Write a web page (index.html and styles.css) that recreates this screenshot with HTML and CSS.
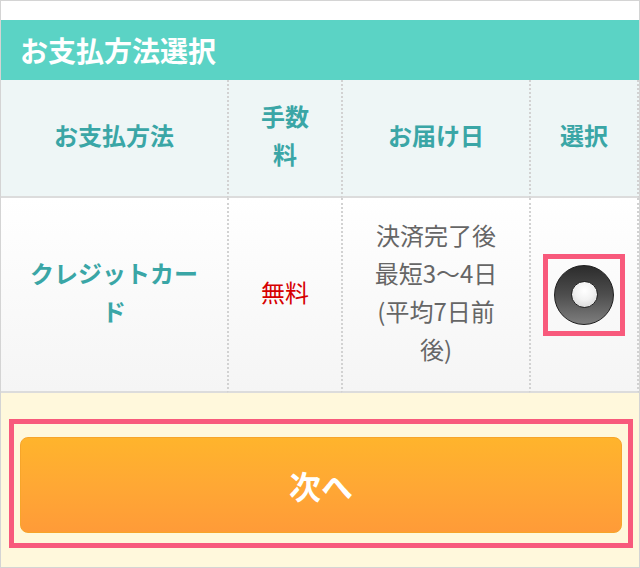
FILE: index.html
```html
<!DOCTYPE html>
<html lang="ja">
<head>
    <meta charset="UTF-8">
    <meta name="viewport" content="width=device-width, initial-scale=1.0">
    <title>お支払方法選択</title>
    <link rel="stylesheet" href="styles.css">
</head>
<body>
    <div class="page">
        <div class="section-title">
            <h2>お支払方法選択</h2>
        </div>

        <table class="pay-table">
            <colgroup>
                <col class="col-method">
                <col class="col-fee">
                <col class="col-date">
                <col class="col-select">
            </colgroup>
            <thead>
                <tr>
                    <th>お支払方法</th>
                    <th>手数料</th>
                    <th>お届け日</th>
                    <th>選択</th>
                </tr>
            </thead>
            <tbody>
                <tr>
                    <td class="method">クレジットカード</td>
                    <td class="fee">無料</td>
                    <td class="date">決済完了後最短3〜4日(平均7日前後)</td>
                    <td class="select">
                        <label class="radio-mark">
                            <input type="radio" name="payment" value="credit" checked>
                            <span class="radio"></span>
                        </label>
                    </td>
                </tr>
            </tbody>
        </table>

        <div class="next-area">
            <div class="next-mark">
                <button class="next-btn" type="button">次へ</button>
            </div>
        </div>
    </div>
</body>
</html>
```

FILE: styles.css
```css
* {
    margin: 0;
    padding: 0;
    box-sizing: border-box;
}

body {
    font-family: "Noto Sans CJK JP", "Noto Sans", sans-serif;
    background: white;
}

.page {
    width: 640px;
    height: 568px;
    border: 1px solid #d4d4d4;
    padding-top: 19px;
    background: white;
    overflow: hidden;
}

.section-title {
    background: #5bd3c5;
    height: 60px;
    padding-left: 19px;
    display: flex;
    align-items: center;
}

.section-title h2 {
    color: white;
    font-size: 28px;
    font-weight: 700;
    line-height: 1;
}

.pay-table {
    width: 638px;
    table-layout: fixed;
    border-collapse: separate;
    border-spacing: 0;
}

.col-method { width: 226px; }
.col-fee { width: 114px; }
.col-date { width: 188px; }
.col-select { width: 110px; }

.pay-table th,
.pay-table td {
    font-size: 24px;
    line-height: 38px;
    text-align: center;
    vertical-align: middle;
    border-left: 2px dotted #d2d2d2;
    border-bottom: 2px solid #dcdcdc;
}

.pay-table th:first-child,
.pay-table td:first-child {
    border-left: none;
}

.pay-table th:last-child,
.pay-table td:last-child {
    border-right: 2px dotted #d2d2d2;
}

.pay-table th {
    background: #eef6f6;
    color: #3aa6a6;
    font-weight: 700;
    height: 118px;
    padding: 17px 26px 23px;
}

.pay-table td {
    background: linear-gradient(to bottom, #ffffff, #f5f5f5);
    height: 195px;
    padding: 17px 24px 23px;
}

.method {
    color: #3aa6a6;
    font-weight: 700;
}

.fee {
    color: #d60000;
}

.pay-table td.date {
    color: #666;
    padding: 17px 22px 23px;
}

.pay-table td.select {
    padding: 0;
}

.radio-mark {
    display: inline-flex;
    align-items: center;
    justify-content: center;
    width: 82px;
    height: 82px;
    border: 5px solid #f85a7c;
    vertical-align: middle;
    cursor: pointer;
}

.radio-mark input {
    display: none;
}

.radio {
    width: 60px;
    height: 60px;
    border-radius: 50%;
    border: 1px solid #1e1e1e;
    background: linear-gradient(to bottom, #2c2c2c 0%, #4e4e4e 50%, #7e7e7e 100%);
    display: flex;
    align-items: center;
    justify-content: center;
}

.radio::after {
    content: "";
    width: 25px;
    height: 25px;
    border-radius: 50%;
    border: 1px solid #222;
    background: radial-gradient(circle at 50% 35%, #ffffff 0%, #f2f2f2 45%, #cfcfcf 100%);
}

.next-area {
    background: #fff8dc;
    height: 175px;
    padding: 26px 6px 0 8px;
}

.next-mark {
    border: 5px solid #f85a7c;
    padding: 13px 6px 10px 6px;
}

.next-btn {
    display: block;
    width: 100%;
    height: 96px;
    border: 1px solid #f7a52a;
    border-radius: 8px;
    background: linear-gradient(to bottom, #ffb42c 0%, #ffa834 50%, #ff9b38 100%);
    color: white;
    font-family: "Noto Sans CJK JP", "Noto Sans", sans-serif;
    font-size: 32px;
    font-weight: 700;
    cursor: pointer;
}
```
